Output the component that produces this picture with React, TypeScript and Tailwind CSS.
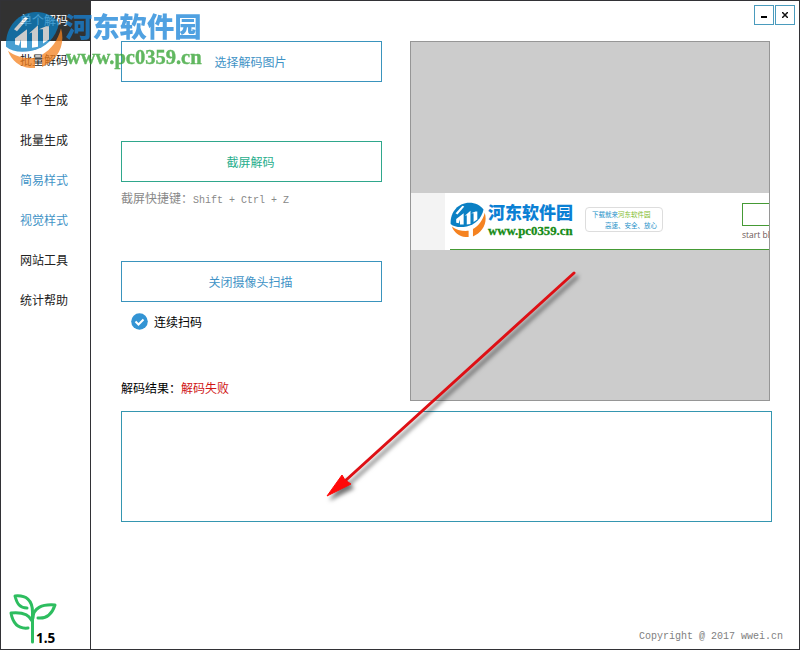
import { clsx } from "clsx";

interface MenuItem {
  label: string;
  tone: "active" | "dark" | "blue";
}

const MENU: MenuItem[] = [
  { label: "单个解码", tone: "active" },
  { label: "批量解码", tone: "dark" },
  { label: "单个生成", tone: "dark" },
  { label: "批量生成", tone: "dark" },
  { label: "简易样式", tone: "blue" },
  { label: "视觉样式", tone: "blue" },
  { label: "网站工具", tone: "dark" },
  { label: "统计帮助", tone: "dark" },
];

function LogoMark({ className }: { className?: string }) {
  return (
    <svg viewBox="0 0 58 56" preserveAspectRatio="none" className={className}>
      <path d="M1 35C0 15 14 1 31 1c10 0 18 4 23 11-3 14-13 24-27 27-11 2-20 1-26-4z" fill="#0b80c4" />
      {/* towers */}
      <path d="M10 33v-6l12-9v18h-6v-8l-2 6zM27 36V21l-3 1 9-8v21zM38 32V18h-4l7-3h3v13z" fill="#fff" />
      <path d="M9 18L20 6l3 1-11 13z" fill="#fff" />
      {/* lower ring */}
      <path d="M56 17c5 17-4 32-19 38V43c9-5 16-14 19-26z" fill="#f58220" />
      <path d="M3 39c7 6 18 8 27 7v10C17 57 7 50 3 39z" fill="#f58220" />
    </svg>
  );
}

function ActionButton({ tone, children }: { tone: "blue" | "green"; children: React.ReactNode }) {
  return (
    <button
      type="button"
      className={clsx(
        "block h-[41px] w-[261px] border pt-[2px] pr-[2px] text-center",
        tone === "blue" ? "border-[#3a94bd] text-[#3f93c6]" : "border-[#2fa78c] text-[#27ae8c]"
      )}
    >
      {children}
    </button>
  );
}

function Sidebar() {
  return (
    <nav className="flex w-[90px] shrink-0 flex-col border-r border-[#323236]">
      {MENU.map((item) => (
        <a
          key={item.label}
          className={clsx(
            "flex h-10 items-center pl-[19px]",
            item.tone === "active" && "bg-[#323232] text-white",
            item.tone === "dark" && "text-[#222]",
            item.tone === "blue" && "text-[#3f93c6]"
          )}
        >
          {item.label}
        </a>
      ))}
      <div className="mt-auto flex items-end pl-2">
        <svg
          viewBox="0 0 48 52"
          className="mb-[5px] h-[52px] w-12"
          fill="none"
          stroke="#2dbd5f"
          strokeWidth="3"
          strokeLinecap="round"
          strokeLinejoin="round"
        >
          <path d="M23.500 50V20C23.500 8 17 3 6 4c2 8 5 12 12 12" />
          <path d="M24 26c0-10 9-14 22-13-3 9-8 14-17 13" />
          <path d="M23 29c-3-7-11-9-21-8 2 11 8 16 17 15" />
        </svg>
        <span className="-ml-[21px] pb-0.5 font-['Noto_Sans'] text-[13.500px] leading-[18px] font-bold text-black">1.5</span>
      </div>
    </nav>
  );
}

function Preview() {
  return (
    <div className="h-[360px] w-[360px] overflow-hidden border border-[#969696] bg-[#ccc] pt-[151px]">
      <div className="flex h-[57px] bg-white">
        <div className="w-[34px] shrink-0 bg-[#f3f3f3]" />
        <div className="ml-[5px] flex w-[330px] shrink-0 border-b border-[#459a35]">
          <LogoMark className="mt-[9px] h-[35px] w-[36px] shrink-0" />
          <div className="ml-[2px] w-[87px] shrink-0 pt-[10px] whitespace-nowrap">
            <div className="text-[17px] leading-[21px] font-black text-[#0b80d4]">河东软件园</div>
            <div className="font-['Liberation_Serif'] text-[12.800px] leading-[14px] font-bold text-[#168b16] [-webkit-text-stroke:0.3px_#168b16]">
              www.pc0359.cn
            </div>
          </div>
          <div className="mt-[14px] ml-[10px] h-[25px] w-[78px] shrink-0 rounded border border-[#ddd] pl-[6px] text-[6.500px] leading-[11px] whitespace-nowrap text-[#2591c9]">
            <div className="pt-[1px]">
              下载就来<span className="text-[#83bd31]">河东软件园</span>
            </div>
            <div className="pl-[13px]">高速、安全、放心</div>
          </div>
          <div className="ml-[79px] w-[60px] shrink-0 pt-[10px]">
            <div className="h-[23px] border border-[#459a35]" />
            <div className="pt-[3px] font-['Open_Sans'] text-[8.500px] leading-3 whitespace-nowrap text-[#6b5757]">start blu</div>
          </div>
        </div>
      </div>
    </div>
  );
}

function Watermark() {
  return (
    <div className="pointer-events-none absolute top-[10px] left-[4px] flex opacity-75">
      <LogoMark className="h-[57px] w-[58px]" />
      <div className="ml-[2px] whitespace-nowrap">
        <div className="text-[27.300px] leading-[34px] font-black text-[#1682d8]">河东软件园</div>
        <div className="ml-[1px] font-['Liberation_Serif'] text-[20.500px] leading-[24px] font-bold text-[#2da02b] [-webkit-text-stroke:0.4px_#2da02b]">
          www.pc0359.cn
        </div>
      </div>
    </div>
  );
}

function Arrow() {
  return (
    <svg viewBox="0 0 270 245" className="pointer-events-none absolute top-[262px] left-[317px] h-[245px] w-[270px]">
      <g className="[filter:drop-shadow(3px_4px_2px_rgba(0,0,0,0.55))]">
        <path d="M256 10L27 218" stroke="#de1015" strokeWidth="3" strokeLinecap="round" />
        <path d="M9 233l15-21 3 5 6 4z" fill="#ff0909" stroke="#ff0909" strokeLinejoin="round" />
      </g>
    </svg>
  );
}

export default function App() {
  return (
    <div className="relative flex h-[650px] w-[800px] overflow-hidden border border-[#323236] bg-white font-['Liberation_Sans','Noto_Sans_CJK_SC',sans-serif] text-xs">
      <Sidebar />
      <main className="flex min-w-0 flex-1 flex-col pl-[30px]">
        <div className="flex h-10 justify-end gap-[1px] pt-1 pr-[4px]">
          <button type="button" className="flex h-5 w-5 items-center justify-center border border-[#4a9bbd]">
            <span className="mt-1 h-0.5 w-1.5 bg-black" />
          </button>
          <button type="button" className="flex h-5 w-5 items-center justify-center border border-[#4a9bbd]">
            <svg viewBox="0 0 6 6" className="h-1.5 w-1.5" stroke="#111" strokeWidth="1.500">
              <path d="M0 0l6 6M6 0L0 6" />
            </svg>
          </button>
        </div>
        <div className="flex gap-7">
          <div className="w-[261px]">
            <ActionButton tone="blue">选择解码图片</ActionButton>
            <div className="mt-[59px]">
              <ActionButton tone="green">截屏解码</ActionButton>
            </div>
            <p className="mt-2 h-[18px] leading-[18px] whitespace-pre text-[#888]">
              截屏快捷键：<span className="font-['Liberation_Mono'] text-[10px]">Shift + Ctrl + Z</span>
            </p>
            <div className="mt-[53px]">
              <ActionButton tone="blue">关闭摄像头扫描</ActionButton>
            </div>
            <label className="mt-3 ml-[10px] flex h-[18px] items-center gap-[6px] text-black">
              <svg viewBox="0 0 17 17" className="mb-[3px] h-[17px] w-[17px]">
                <circle cx="8.500" cy="8.500" r="8.300" fill="#3394d4" />
                <path d="M4.500 8.500l3 3 5-5" fill="none" stroke="#fff" strokeWidth="2" />
              </svg>
              连续扫码
            </label>
            <p className="mt-12 leading-[18px] text-black">
              解码结果：<span className="text-[#d01515]">解码失败</span>
            </p>
          </div>
          <Preview />
        </div>
        <div className="mt-[10px] h-[111px] w-[651px] shrink-0 border border-[#3596b0]" />
        <footer className="mt-auto pr-4 pb-1 text-right font-['Liberation_Mono'] text-[10px] leading-4 text-[#808080]">
          Copyright @ 2017 wwei.cn
        </footer>
      </main>
      <Watermark />
      <Arrow />
    </div>
  );
}
